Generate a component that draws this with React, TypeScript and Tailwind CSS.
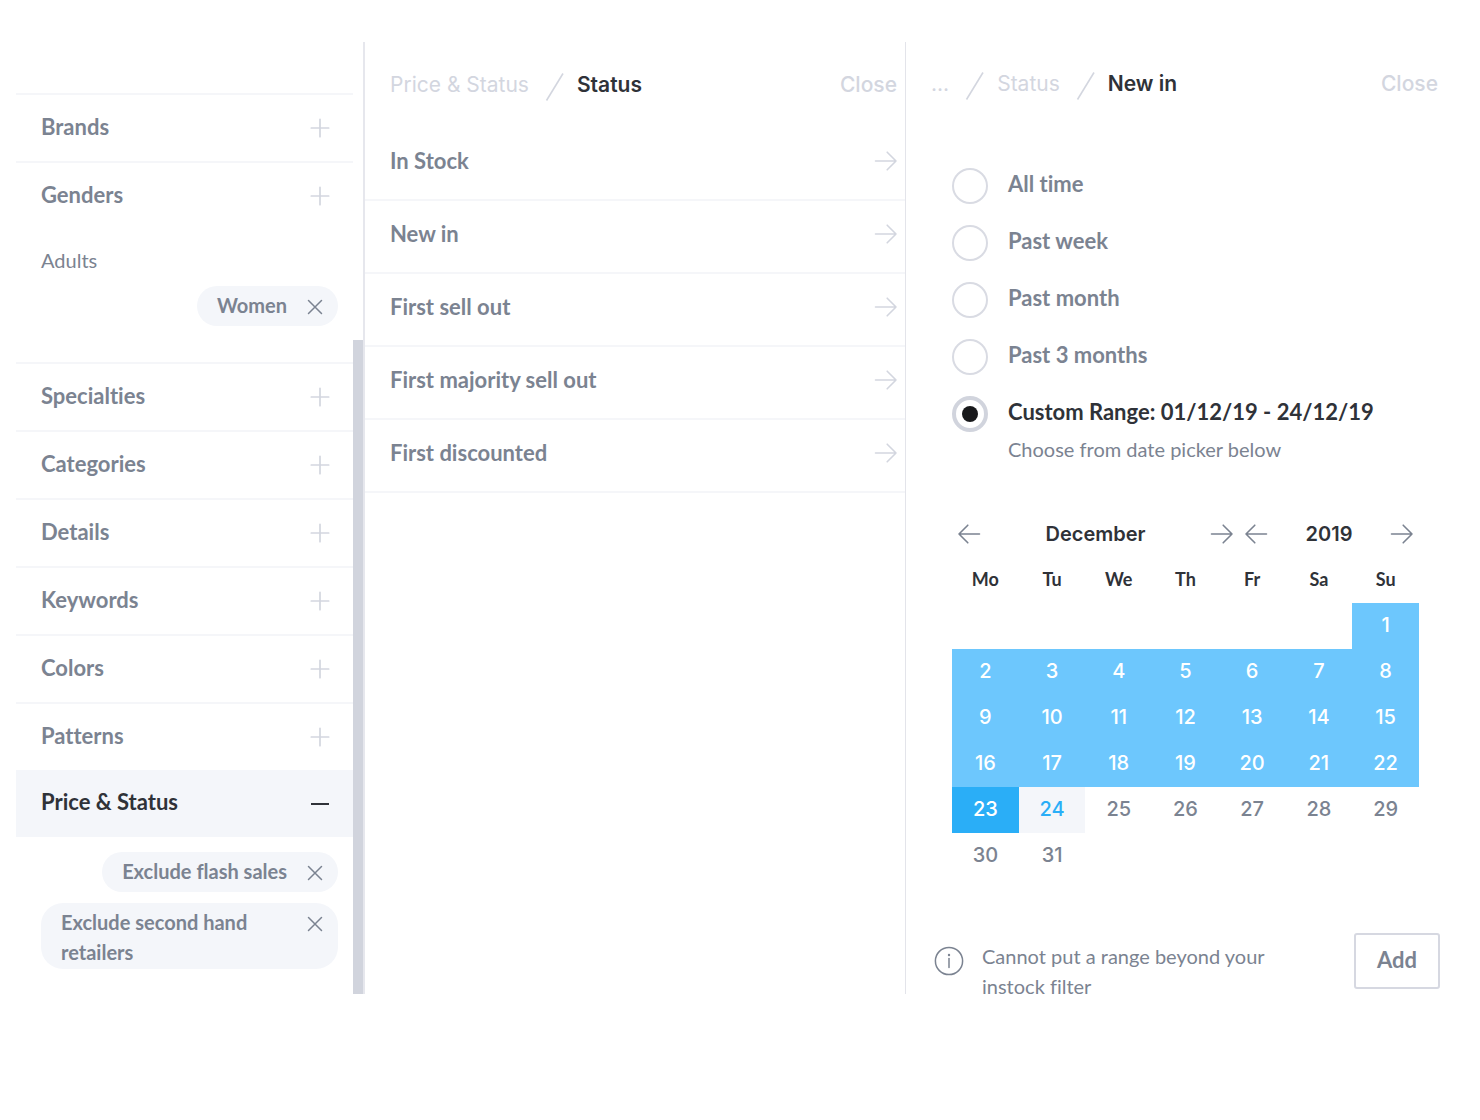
import { useState } from "react";

type IconProps = { className?: string };

const PlusIcon = ({ className }: IconProps) => (
  <svg className={className} width="20" height="20" viewBox="0 0 20 20" fill="none" stroke="currentColor" strokeWidth="1.7" strokeLinecap="round" aria-hidden="true">
    <path d="M10 1.3v17.4M1.3 10h17.4" />
  </svg>
);

const MinusIcon = ({ className }: IconProps) => (
  <svg className={className} width="20" height="20" viewBox="0 0 20 20" fill="none" stroke="currentColor" strokeWidth="2" aria-hidden="true">
    <path d="M1 10h18" />
  </svg>
);

const CrossIcon = () => (
  <svg width="16" height="16" viewBox="0 0 16 16" fill="none" stroke="currentColor" strokeWidth="1.5" strokeLinecap="round" aria-hidden="true">
    <path d="M1.5 1.5l13 13M14.5 1.5l-13 13" />
  </svg>
);

const ArrowRight = ({ className }: IconProps) => (
  <svg className={className} width="24" height="20" viewBox="0 0 24 20" fill="none" stroke="currentColor" strokeWidth="1.6" strokeLinecap="round" strokeLinejoin="round" aria-hidden="true">
    <path d="M1.5 10H22M13.2 1.2L22 10l-8.8 8.8" />
  </svg>
);

const ArrowLeft = ({ className }: IconProps) => (
  <svg className={className} width="24" height="20" viewBox="0 0 24 20" fill="none" stroke="currentColor" strokeWidth="1.6" strokeLinecap="round" strokeLinejoin="round" aria-hidden="true">
    <path d="M22.5 10H2M10.8 1.2L2 10l8.8 8.8" />
  </svg>
);

const Slash = () => (
  <svg className="mt-1 mr-3 ml-4" width="20" height="30" viewBox="0 0 20 30" fill="none" stroke="#d3d6df" strokeWidth="1.6" aria-hidden="true">
    <path d="M1.5 28.5L18 1.5" />
  </svg>
);

const InfoIcon = () => (
  <svg className="shrink-0" width="30" height="30" viewBox="0 0 30 30" fill="none" stroke="#7b8391" strokeWidth="1.5" aria-hidden="true">
    <circle cx="15" cy="15" r="13.6" />
    <path d="M15 12.5v9" strokeLinecap="round" />
    <circle cx="15" cy="9" r="1.2" fill="#7b8391" stroke="none" />
  </svg>
);

function FilterRow({ label }: { label: string }) {
  return (
    <button type="button" className="flex h-[68px] w-full items-center justify-between border-t-2 border-[#f5f6f9] pr-[23px] pl-[25px] text-left">
      <span className="pb-1">{label}</span>
      <PlusIcon className="text-[#d3d6df]" />
    </button>
  );
}

function Chip({ label }: { label: string }) {
  return (
    <span className="flex items-start gap-5 rounded-[22px] bg-[#f4f6fa] pt-1 pr-[15px] pb-[2px] pl-5 text-[20px] leading-[30px]">
      <span className="flex-1">{label}</span>
      <button type="button" aria-label={`Remove ${label}`} className="flex h-[34px] items-center">
        <CrossIcon />
      </button>
    </span>
  );
}

const upperFilters = ["Specialties", "Categories", "Details", "Keywords", "Colors", "Patterns"];
const statuses = ["In Stock", "New in", "First sell out", "First majority sell out", "First discounted"];
const ranges = ["All time", "Past week", "Past month", "Past 3 months", "Custom Range: 01/12/19 - 24/12/19"];
const weekdays = ["Mo", "Tu", "We", "Th", "Fr", "Sa", "Su"];
const weeks = Array.from({ length: 6 }, (_, w) => Array.from({ length: 7 }, (_, d) => w * 7 + d - 5));

function dayStyle(day: number) {
  if (day < 23) return "bg-[#6dc7fd] text-white";
  if (day === 23) return "bg-[#2aaef7] text-white";
  if (day === 24) return "bg-[#f4f6fa] text-[#2aaef7]";
  return "text-[#7b8391]";
}

export default function App() {
  const [range, setRange] = useState(ranges[4]);

  return (
    <main className="grid grid-cols-[349fr_541fr_534fr] bg-white pt-[42px] pr-10 pl-4 font-['Lato',sans-serif] text-[22px] font-bold text-[#7b8391] [font-variant-ligatures:none]">
      <aside className="flex border-r-2 border-[#e6e7ed]">
        <div className="min-w-0 flex-1 pt-[51px]">
          <FilterRow label="Brands" />
          <FilterRow label="Genders" />
          <div className="flex flex-col items-end pt-[19px] pr-[15px] pb-9 pl-[25px]">
            <p className="mb-[14px] w-full text-[20px] leading-6 font-normal">Adults</p>
            <Chip label="Women" />
          </div>
          {upperFilters.map((label) => (
            <FilterRow key={label} label={label} />
          ))}
          <button type="button" className="flex h-[67px] w-full items-center justify-between bg-[#f4f6fa] pr-[23px] pl-[25px] text-left text-[#2f3238]">
            <span className="pb-1">Price &amp; Status</span>
            <MinusIcon />
          </button>
          <div className="flex flex-col items-end gap-[11px] pt-[15px] pr-[15px] pb-6 pl-[25px]">
            <Chip label="Exclude flash sales" />
            <Chip label="Exclude second hand retailers" />
          </div>
        </div>
        <div className="mt-[298px] w-[10px] bg-[#d1d4dd]" />
      </aside>

      <section className="border-r border-[#e3e4ea]">
        <header className="flex h-[86px] items-center pr-2 pl-[25px] font-['Inter',sans-serif] text-[21px]">
          <a href="#price-status" className="font-normal text-[#d3d6df]">Price &amp; Status</a>
          <Slash />
          <h2 className="font-semibold text-[#2f3238]">Status</h2>
          <button type="button" className="ml-auto font-medium text-[#d3d6df]">Close</button>
        </header>
        <ul>
          {statuses.map((label) => (
            <li key={label}>
              <button type="button" className="flex h-[73px] w-full items-center justify-between border-b-2 border-[#f5f6f9] pr-[7px] pb-[6px] pl-[25px] text-left">
                <span>{label}</span>
                <ArrowRight className="text-[#d3d6df]" />
              </button>
            </li>
          ))}
        </ul>
      </section>

      <section>
        <header className="flex h-[84px] items-center pr-[2px] pl-[25px] font-['Inter',sans-serif] text-[21px]">
          <a href="#more" aria-label="Earlier levels" className="font-normal text-[#d3d6df]">...</a>
          <Slash />
          <a href="#status" className="font-normal text-[#d3d6df]">Status</a>
          <Slash />
          <h2 className="font-semibold text-[#2f3238]">New in</h2>
          <button type="button" className="ml-auto font-medium text-[#d3d6df]">Close</button>
        </header>

        <fieldset className="pt-[31px] pl-[46px]">
          {ranges.map((label) => (
            <label key={label} className="flex h-[57px] items-center gap-5 has-checked:text-[#2f3238]">
              <input
                type="radio"
                name="range"
                checked={range === label}
                onChange={() => setRange(label)}
                className="grid size-9 shrink-0 appearance-none place-content-center rounded-full border-2 border-[#d9dbe3] checked:border-4 checked:border-[#d1d4dd] checked:before:size-4 checked:before:rounded-full checked:before:bg-[#18191b]"
              />
              <span className="pb-1">{label}</span>
            </label>
          ))}
          <p className="-mt-2 pl-14 text-[20px] leading-[30px] font-normal">Choose from date picker below</p>
        </fieldset>

        <div className="pt-[55px] pr-[21px] pl-[46px]">
          <div className="grid grid-cols-[287fr_180fr] font-['Inter',sans-serif] text-[20px] font-semibold text-[#2f3238]">
            <div className="flex h-[30px] items-center justify-between px-[5px]">
              <button type="button" aria-label="Previous month"><ArrowLeft className="text-[#7b8391]" /></button>
              <span>December</span>
              <button type="button" aria-label="Next month"><ArrowRight className="text-[#7b8391]" /></button>
            </div>
            <div className="flex h-[30px] items-center justify-between px-[5px]">
              <button type="button" aria-label="Previous year"><ArrowLeft className="text-[#7b8391]" /></button>
              <span>2019</span>
              <button type="button" aria-label="Next year"><ArrowRight className="text-[#7b8391]" /></button>
            </div>
          </div>
          <table className="mt-3 w-full table-fixed border-collapse text-center">
            <thead>
              <tr className="h-[42px] text-[18px] text-[#2f3238]">
                {weekdays.map((d) => (
                  <th key={d} scope="col" className="pb-[6px]">{d}</th>
                ))}
              </tr>
            </thead>
            <tbody className="font-['Inter',sans-serif] text-[20px] font-medium">
              {weeks.map((week, i) => (
                <tr key={i} className="h-[46px]">
                  {week.map((day) =>
                    day >= 1 && day <= 31 ? (
                      <td key={day} className="p-0">
                        <button type="button" className={`block h-[46px] w-full pb-[3px] ${dayStyle(day)}`}>{day}</button>
                      </td>
                    ) : (
                      <td key={day} className="p-0" />
                    ),
                  )}
                </tr>
              ))}
            </tbody>
          </table>
        </div>

        <footer className="flex items-start pt-[54px] pl-7">
          <div className="pt-[13px]"><InfoIcon /></div>
          <p className="-mb-[7px] w-[320px] pt-2 pl-[18px] text-[20px] leading-[30px] font-normal">Cannot put a range beyond your instock filter</p>
          <button type="button" className="ml-auto h-14 rounded-[3px] border-2 border-[#d6d8e1] px-[21px] pb-1">Add</button>
        </footer>
      </section>
    </main>
  );
}
